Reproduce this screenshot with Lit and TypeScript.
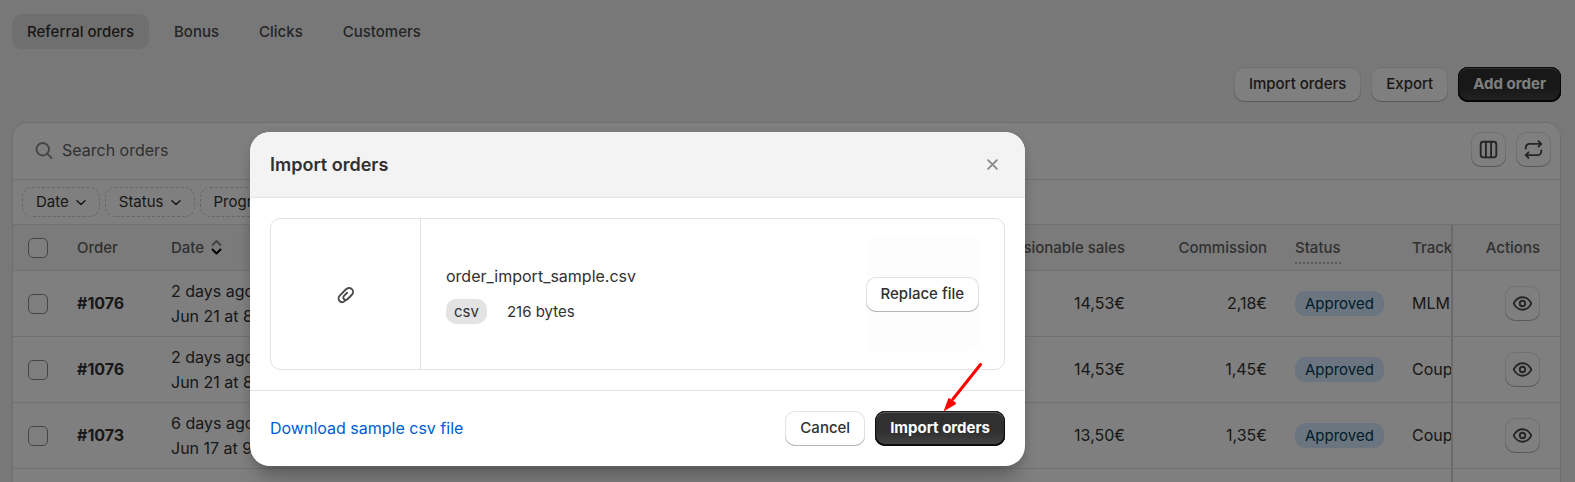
import { LitElement, html, css, svg } from "lit";
import { customElement, property } from "lit/decorators.js";

const icon = (body: unknown, size = 25, stroke = 1.5) => html`<svg
  width=${size} height=${size} viewBox="0 0 20 20" fill="none" stroke="currentColor"
  stroke-width=${stroke} stroke-linecap="round" stroke-linejoin="round" aria-hidden="true"
>${body}</svg>`;

const columnsIcon = svg`<rect x="3.75" y="3.75" width="12.5" height="12.5" rx="2"/><path d="M7.9 4v12M12.1 4v12"/>`;
const swapIcon = svg`<path d="M3.75 9.25v-.75a3 3 0 0 1 3-3h9.5M14 3.25l2.25 2.25L14 7.75"/><path d="M16.25 10.75v.75a3 3 0 0 1-3 3h-9.5M6 12.25L3.75 14.5L6 16.75"/>`;
const eyeIcon = svg`<path d="M3.3 10.7a1.3 1.3 0 0 1 0-1.4C4.8 6.8 7 5 10 5s5.2 1.8 6.7 4.3a1.3 1.3 0 0 1 0 1.4C15.2 13.2 13 15 10 15s-5.2-1.8-6.7-4.3z"/><circle cx="10" cy="10" r="2.2"/>`;
const searchIcon = svg`<circle cx="9.4" cy="9" r="5"/><path d="M13.1 12.7l3.3 3.3"/>`;
const chevronIcon = svg`<path d="M6 8.7L10 12.5L14 8.7"/>`;
const clipIcon = svg`<path d="M10 14.6l-.7.7a2.9 2.9 0 0 1-4-.1a3.1 3.1 0 0 1 .1-4.3l5-5.1a3.3 3.3 0 0 1 4.7-.1a3.2 3.2 0 0 1 0 4.500l-3.600 3.600a1.900 1.900 0 0 1-2.700 0a1.900 1.900 0 0 1 0-2.700l2.500-2.500"/>`;
const closeIcon = svg`<path d="M6.500 6.500l7 7M13.500 6.500l-7 7"/>`;

const buttonStyles = css`
  button {
    font: inherit;
    color: inherit;
    border: 0;
    padding: 0;
    margin: 0;
    background: none;
    cursor: pointer;
  }
  svg {
    display: block;
    flex: none;
  }
  .btn {
    box-sizing: border-box;
    display: inline-flex;
    align-items: center;
    justify-content: center;
    height: 35px;
    padding: 0 15px 1px;
    border-radius: 10px;
    font-size: 15px;
    line-height: 20px;
    font-weight: 550;
    color: #303030;
    white-space: nowrap;
    background: #fff;
    box-shadow: inset 0 -1px 0 #b5b5b5, inset 0 0 0 1px #e3e3e3;
  }
  .btn.primary {
    color: #fff;
    font-weight: 650;
    background: linear-gradient(#303030 60%, #474747);
    box-shadow: inset 0 -1px 0 1px #0d0d0d, inset 0 0 0 1px #1c1c1c,
      inset 0 1px 0 1px #5c5c5c;
  }
  .btn.square {
    width: 35px;
    padding: 0;
    color: #4a4a4a;
  }
`;

interface Order {
  id: string;
  ago: string;
  date: string;
  sales: string;
  commission: string;
  tracking: string;
}

@customElement("orders-table")
class OrdersTable extends LitElement {
  @property({ attribute: false }) orders: Order[] = [];

  static styles = [
    buttonStyles,
    css`
      :host {
        display: block;
        overflow: hidden;
      }
      table {
        width: 100%;
        table-layout: fixed;
        border-collapse: separate;
        border-spacing: 0;
        font-size: 16px;
        line-height: 25px;
      }
      .c-check { width: 50px; }
      .c-order { width: 94px; }
      .c-date { width: 140px; }
      .c-commission { width: 142px; }
      .c-status { width: 117px; }
      .c-tracking { width: 53px; }
      .c-actions { width: 109px; }
      th,
      td {
        padding: 0 14px;
        text-align: left;
        vertical-align: middle;
        white-space: nowrap;
        border-bottom: 1px solid #e3e3e3;
      }
      th {
        height: 45px;
        font-size: 15px;
        line-height: 20px;
        font-weight: 550;
        color: #616161;
        background: #f7f7f7;
      }
      td {
        height: 65px;
      }
      .check {
        padding: 0 15px;
      }
      .check input {
        display: block;
        appearance: none;
        width: 20px;
        height: 20px;
        margin: 0;
        border: 1px solid #8a8a8a;
        border-radius: 5px;
        background: #fdfdfd;
      }
      .number {
        text-align: right;
      }
      .id {
        font-weight: 650;
      }
      .sort {
        display: flex;
        align-items: center;
        gap: 7px;
      }
      .hint {
        display: block;
        width: fit-content;
        padding: 6px 0 4px;
        border-bottom: 2px dotted #b5b5b5;
      }
      .badge {
        display: block;
        width: fit-content;
        padding: 0 10px;
        border-radius: 10px;
        font-size: 15px;
        line-height: 25px;
        color: #003a5a;
        background: #d5ebff;
      }
      .tracking {
        padding-right: 0;
        overflow: hidden;
      }
      .actions {
        padding: 0 20px 0 0;
        text-align: right;
        border-left: 2px solid #d6d6d6;
      }
      .actions .btn {
        display: flex;
        margin-left: auto;
      }
      .next td {
        height: 13px;
        border-bottom: 0;
      }
    `,
  ];

  render() {
    return html`
      <table>
        <colgroup>
          <col class="c-check" /><col class="c-order" /><col class="c-date" /><col />
          <col class="c-commission" /><col class="c-status" /><col class="c-tracking" />
          <col class="c-actions" />
        </colgroup>
        <thead>
          <tr>
            <th class="check"><input type="checkbox" aria-label="Select all orders" /></th>
            <th>Order</th>
            <th>
              <button class="sort">
                Date
                <svg width="11" height="17" viewBox="0 0 11 17" fill="none" stroke-width="2"
                  stroke-linecap="round" stroke-linejoin="round" aria-hidden="true">
                  <path d="M1.5 6L5.5 2L9.5 6" stroke="#8a8a8a" />
                  <path d="M1.5 10.5L5.5 14.5L9.5 10.5" stroke="#000" />
                </svg>
              </button>
            </th>
            <th class="number">Commissionable sales</th>
            <th class="number">Commission</th>
            <th><span class="hint">Status</span></th>
            <th class="tracking">Tracking</th>
            <th class="actions">Actions</th>
          </tr>
        </thead>
        <tbody>
          ${this.orders.map(
            (o) => html`<tr>
              <td class="check"><input type="checkbox" aria-label="Select order ${o.id}" /></td>
              <td class="id">${o.id}</td>
              <td>${o.ago}<br />${o.date}</td>
              <td class="number">${o.sales}</td>
              <td class="number">${o.commission}</td>
              <td><span class="badge">Approved</span></td>
              <td class="tracking">${o.tracking}</td>
              <td class="actions">
                <button class="btn square" aria-label="View order ${o.id}">${icon(eyeIcon)}</button>
              </td>
            </tr>`
          )}
          <tr class="next"><td colspan="7"></td><td class="actions"></td></tr>
        </tbody>
      </table>
    `;
  }
}

@customElement("import-dialog")
class ImportDialog extends LitElement {
  static styles = [
    buttonStyles,
    css`
      :host {
        position: relative;
        display: block;
        width: 100%;
        max-width: 775px;
      }
      .panel {
        border-radius: 20px;
        overflow: hidden;
        background: #fff;
        box-shadow: 0 20px 20px -8px rgba(26, 26, 26, 0.28), 0 2px 8px rgba(0, 0, 0, 0.15);
      }
      header {
        display: flex;
        align-items: center;
        justify-content: space-between;
        height: 65px;
        padding: 0 20px;
        background: #f3f3f3;
        border-bottom: 1px solid #e3e3e3;
      }
      h2 {
        margin: 0;
        font-size: 18px;
        line-height: 25px;
        font-weight: 600;
      }
      .close {
        color: #8a8a8a;
      }
      .body {
        padding: 20px;
      }
      .file {
        display: flex;
        min-height: 150px;
        border: 1px solid #e3e3e3;
        border-radius: 10px;
      }
      .thumb {
        display: flex;
        align-items: center;
        justify-content: center;
        width: 149px;
        border-right: 1px solid #e3e3e3;
        color: #4a4a4a;
      }
      .details {
        flex: 1;
        display: flex;
        justify-content: space-between;
        padding: 18px 25px;
      }
      .info {
        display: flex;
        flex-direction: column;
        justify-content: center;
        gap: 10px;
      }
      .name {
        font-size: 16px;
        line-height: 25px;
      }
      .meta {
        display: flex;
        gap: 20px;
        font-size: 15px;
        line-height: 25px;
      }
      .tag {
        padding: 0 8px;
        border-radius: 10px;
        background: #e3e3e3;
      }
      .replace {
        display: flex;
        align-items: center;
        border-radius: 10px;
        background: #fdfdfd;
      }
      footer {
        display: flex;
        align-items: center;
        gap: 10px;
        padding: 20px;
        border-top: 1px solid #e3e3e3;
      }
      a {
        margin-right: auto;
        font-size: 16px;
        line-height: 25px;
        color: #005bd3;
        text-decoration: none;
      }
      .arrow {
        position: absolute;
        right: 40px;
        bottom: 53px;
      }
    `,
  ];

  render() {
    return html`
      <div class="panel" role="dialog" aria-modal="true" aria-labelledby="title">
        <header>
          <h2 id="title">Import orders</h2>
          <button class="close" aria-label="Close">${icon(closeIcon)}</button>
        </header>
        <div class="body">
          <div class="file">
            <div class="thumb">${icon(clipIcon)}</div>
            <div class="details">
              <div class="info">
                <div class="name">order_import_sample.csv</div>
                <div class="meta"><span class="tag">csv</span><span>216 bytes</span></div>
              </div>
              <div class="replace"><button class="btn">Replace file</button></div>
            </div>
          </div>
        </div>
        <footer>
          <a href="#sample">Download sample csv file</a>
          <button class="btn">Cancel</button>
          <button class="btn primary">Import orders</button>
        </footer>
      </div>
      <svg class="arrow" width="42" height="52" viewBox="0 0 42 52" aria-hidden="true">
        <path d="M37.500 3.500L10 38" stroke="#f00" stroke-width="3" stroke-linecap="round" />
        <path d="M.5 50.500L5.500 37L8 38L12.500 41.500L13 43Z" fill="#f00" />
      </svg>
    `;
  }
}

@customElement("app-root")
class AppRoot extends LitElement {
  private tabs = ["Referral orders", "Bonus", "Clicks", "Customers"];
  private filters = ["Date", "Status", "Program"];
  private orders: Order[] = [
    { id: "#1076", ago: "2 days ago", date: "Jun 21 at 8:", sales: "14,53€", commission: "2,18€", tracking: "MLM" },
    { id: "#1076", ago: "2 days ago", date: "Jun 21 at 8:", sales: "14,53€", commission: "1,45€", tracking: "Coupon" },
    { id: "#1073", ago: "6 days ago", date: "Jun 17 at 9:", sales: "13,50€", commission: "1,35€", tracking: "Coupon" },
  ];

  static styles = [
    buttonStyles,
    css`
      :host {
        display: block;
        height: 100vh;
        overflow: hidden;
        font-family: Inter, "Liberation Sans", sans-serif;
        font-size: 16px;
        color: #303030;
        background: #f1f1f1;
      }
      main {
        display: flex;
        flex-direction: column;
        padding: 14px 14px 0 12px;
      }
      nav {
        display: flex;
        gap: 10px;
      }
      .tab {
        padding: 0 15px;
        border-radius: 10px;
        font-size: 15px;
        line-height: 35px;
        font-weight: 550;
        color: #4a4a4a;
      }
      .tab.active {
        color: #303030;
        background: #dfdfdf;
      }
      .toolbar {
        display: flex;
        justify-content: flex-end;
        gap: 10px;
        padding: 18px 0 20px;
      }
      .card {
        border: 1px solid #dcdcdc;
        border-bottom: 0;
        border-radius: 15px 15px 0 0;
        overflow: hidden;
        background: #fff;
      }
      .search {
        display: flex;
        align-items: center;
        gap: 10px;
        padding: 9px 9px 12px 18px;
        border-bottom: 1px solid #e3e3e3;
      }
      .field {
        flex: 1;
        display: flex;
        align-items: center;
        gap: 6px;
        padding-top: 2px;
        color: #8a8a8a;
      }
      .field input {
        flex: 1;
        border: 0;
        padding: 0;
        outline: 0;
        font: inherit;
        line-height: 25px;
        color: #303030;
        background: none;
      }
      .field input::placeholder {
        color: #616161;
        opacity: 1;
      }
      .filters {
        display: flex;
        gap: 5px;
        padding: 7px 9px;
        border-bottom: 1px solid #e3e3e3;
      }
      .filters .chip {
        display: flex;
        align-items: center;
        gap: 2px;
        height: 30px;
        padding: 0 8px 1px 13px;
        border: 1px dashed #ccc;
        border-radius: 10px;
        font-size: 15px;
      }
      .backdrop {
        position: absolute;
        inset: 0;
        display: flex;
        align-items: flex-start;
        padding: 132px 20px 0 250px;
        background: rgba(0, 0, 0, 0.5);
      }
    `,
  ];

  render() {
    return html`
      <main>
        <nav>
          ${this.tabs.map((t, i) => html`<button class="tab ${i === 0 ? "active" : ""}">${t}</button>`)}
        </nav>
        <div class="toolbar">
          <button class="btn">Import orders</button>
          <button class="btn">Export</button>
          <button class="btn primary">Add order</button>
        </div>
        <section class="card">
          <div class="search">
            <label class="field">
              ${icon(searchIcon)}
              <input type="search" placeholder="Search orders" aria-label="Search orders" />
            </label>
            <button class="btn square" aria-label="Edit columns">${icon(columnsIcon)}</button>
            <button class="btn square" aria-label="Refresh">${icon(swapIcon)}</button>
          </div>
          <div class="filters">
            ${this.filters.map((f) => html`<button class="chip">${f}${icon(chevronIcon, 20, 1.5)}</button>`)}
          </div>
          <orders-table .orders=${this.orders}></orders-table>
        </section>
      </main>
      <div class="backdrop"><import-dialog></import-dialog></div>
    `;
  }
}
